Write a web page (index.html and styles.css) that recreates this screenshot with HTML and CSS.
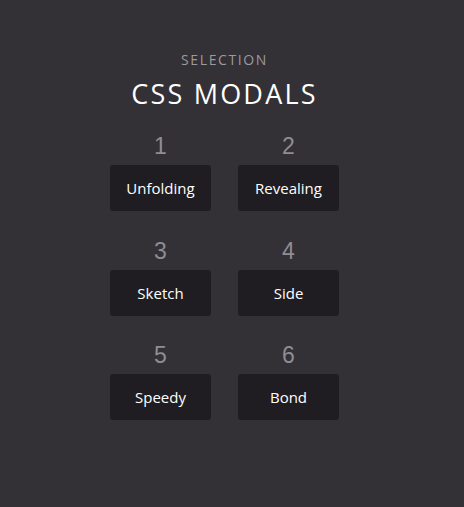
FILE: index.html
```html
<!DOCTYPE html>
<html>
<head>
<meta charset="utf-8">
<link rel="stylesheet" href="styles.css">
</head>
<body>
<div class="page">
  <div class="eyebrow">SELECTION</div>
  <h1 class="title">CSS MODALS</h1>
  <div class="grid">
    <div class="cell"><div class="num">1</div><button class="btn">Unfolding</button></div>
    <div class="cell"><div class="num">2</div><button class="btn">Revealing</button></div>
    <div class="cell"><div class="num">3</div><button class="btn">Sketch</button></div>
    <div class="cell"><div class="num">4</div><button class="btn">Side</button></div>
    <div class="cell"><div class="num">5</div><button class="btn">Speedy</button></div>
    <div class="cell"><div class="num">6</div><button class="btn">Bond</button></div>
  </div>
</div>
</body>
</html>
```
FILE: styles.css
```css
html, body {
  margin: 0;
  padding: 0;
  background: #333036;
  height: 100%;
}
.page {
  width: 449px;
  display: flex;
  flex-direction: column;
  align-items: center;
  padding-top: 50px;
  font-family: "Open Sans", "Liberation Sans", sans-serif;
}
.eyebrow {
  font-size: 14px;
  line-height: 20px;
  letter-spacing: 1.6px;
  color: #9b9a9f;
}
.title {
  margin: 7px 0 0;
  font-size: 27px;
  line-height: 34px;
  font-weight: 400;
  letter-spacing: 2.2px;
  color: #ffffff;
}
.grid {
  margin-top: 20px;
  display: grid;
  grid-template-columns: 101px 101px;
  column-gap: 27px;
  row-gap: 24.5px;
}
.cell {
  display: flex;
  flex-direction: column;
  align-items: stretch;
  gap: 4px;
}
.num {
  text-align: center;
  font-family: "Liberation Sans", Arial, sans-serif;
  font-size: 23px;
  line-height: 30px;
  color: #8f8d93;
}
.btn {
  height: 46px;
  border: none;
  border-radius: 3px;
  background: #1f1d21;
  color: #ffffff;
  font-family: "Open Sans", "Liberation Sans", sans-serif;
  font-size: 15px;
  font-weight: 500;
  padding: 0;
}
```
